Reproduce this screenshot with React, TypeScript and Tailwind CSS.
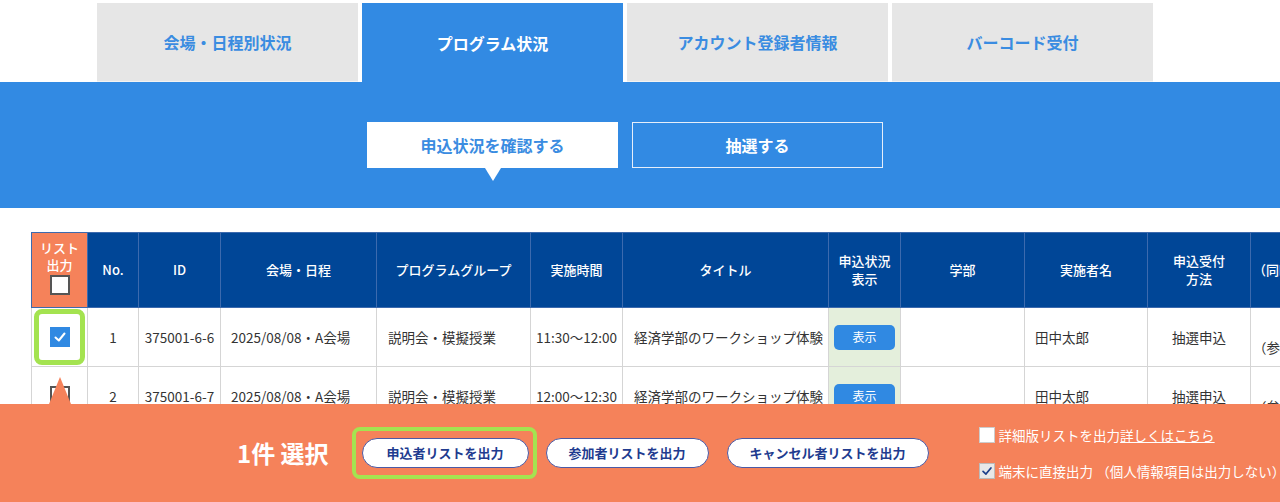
import React from "react";

const font = { fontFamily: '"Noto Sans CJK JP", "Noto Sans", sans-serif' };

const tabs = [
  { label: "会場・日程別状況", active: false },
  { label: "プログラム状況", active: true },
  { label: "アカウント登録者情報", active: false },
  { label: "バーコード受付", active: false },
];

const cols = [56, 51, 82, 156, 154, 92, 206, 72, 124, 123, 103, 140];

const rows = [
  { no: 1, id: "375001-6-6", date: "2025/08/08・A会場", group: "説明会・模擬授業", time: "11:30〜12:00", checked: true },
  { no: 2, id: "375001-6-7", date: "2025/08/08・A会場", group: "説明会・模擬授業", time: "12:00〜12:30", checked: false },
];

const Check = ({ className }: { className?: string }) => (
  <svg viewBox="0 0 16 16" className={className} fill="none">
    <path d="M3.5 8.5 L6.8 11.5 L12.5 4.5" stroke="currentColor" strokeWidth="2" strokeLinecap="round" strokeLinejoin="round" />
  </svg>
);

const Th = ({ children, className = "" }: { children?: React.ReactNode; className?: string }) => (
  <th className={`border border-[#3c6aae] text-[13px] font-medium leading-[18px] text-white ${className}`}>{children}</th>
);

const Td = ({ children, className = "" }: { children?: React.ReactNode; className?: string }) => (
  <td className={`border border-[#d5d5d5] text-[13.5px] text-[#333] ${className}`}>{children}</td>
);

export default function App() {
  return (
    <div className="relative h-[502px] w-[1280px] overflow-hidden bg-white" style={font}>
      {/* tabs */}
      <div className="ml-[97px] flex gap-[4px] pt-[3px]">
        {tabs.map((t) => (
          <div
            key={t.label}
            className={`flex h-[79px] w-[261px] items-center justify-center text-[16px] font-bold ${
              t.active ? "bg-[#328ae3] text-white" : "border-b border-[#f3f3f3] bg-[#e6e6e6] text-[#3a8ce1]"
            }`}
          >
            {t.label}
          </div>
        ))}
      </div>

      {/* blue band */}
      <div className="flex h-[126px] items-start bg-[#328ae3] pt-[40px]">
        <div className="ml-[367px] flex gap-[14px]">
          <div className="relative flex h-[46px] w-[251px] items-center justify-center bg-white text-[16px] font-bold text-[#3a8ce1]">
            申込状況を確認する
            <span className="absolute left-1/2 top-full -translate-x-1/2 border-x-[8px] border-t-[13px] border-x-transparent border-t-white" />
          </div>
          <div className="flex h-[46px] w-[251px] items-center justify-center border border-[#e6eefa] text-[16px] font-bold text-white">
            抽選する
          </div>
        </div>
      </div>

      {/* table */}
      <div className="ml-[31px] mt-[24px]">
        <table className="table-fixed border-collapse" style={{ width: cols.reduce((a, b) => a + b, 0) }}>
          <colgroup>
            {cols.map((w, i) => (
              <col key={i} style={{ width: w }} />
            ))}
          </colgroup>
          <thead>
            <tr className="h-[75px] bg-[#004697]">
              <Th className="bg-[#f5825a] align-top">
                <div className="flex flex-col items-center pt-[6px] leading-[17px]">
                  <span>リスト</span>
                  <span>出力</span>
                  <span className="mt-[2px] block h-[20px] w-[20px] border-2 border-[#555] bg-white" />
                </div>
              </Th>
              <Th>No.</Th>
              <Th>ID</Th>
              <Th>会場・日程</Th>
              <Th>プログラムグループ</Th>
              <Th>実施時間</Th>
              <Th>タイトル</Th>
              <Th>
                申込状況
                <br />
                表示
              </Th>
              <Th>学部</Th>
              <Th>実施者名</Th>
              <Th>
                申込受付
                <br />
                方法
              </Th>
              <Th className="text-left">
                <span className="pl-[2px]">（同時申込）</span>
              </Th>
            </tr>
          </thead>
          <tbody>
            {rows.map((r) => (
              <tr key={r.no} className="h-[59px]">
                <Td className="relative text-center">
                  {r.checked && (
                    <span className="absolute inset-x-[2px] inset-y-[1px] rounded-[8px] border-[5px] border-[#a4e350]" />
                  )}
                  {r.checked ? (
                    <span className="mx-auto flex h-[20px] w-[20px] items-center justify-center bg-[#3089e2] text-white">
                      <Check className="h-[16px] w-[16px]" />
                    </span>
                  ) : (
                    <span className="mx-auto block h-[20px] w-[20px] border-2 border-[#555] bg-white" />
                  )}
                </Td>
                <Td className="text-center">{r.no}</Td>
                <Td className="text-center">{r.id}</Td>
                <Td className="pl-[10px]">{r.date}</Td>
                <Td className="pl-[11px]">{r.group}</Td>
                <Td className="text-center">{r.time}</Td>
                <Td className="pl-[11px]">経済学部のワークショップ体験</Td>
                <Td className="bg-[#e4efdc]">
                  <span className="mx-auto flex h-[25px] w-[61px] items-center justify-center rounded-[5px] bg-[#3089e2] text-[12px] text-white">
                    表示
                  </span>
                </Td>
                <Td />
                <Td className="pl-[10px]">田中太郎</Td>
                <Td className="text-center">抽選申込</Td>
                <Td className="pl-[2px] pt-[20px]">（参加）</Td>
              </tr>
            ))}
          </tbody>
        </table>
      </div>

      {/* footer bar */}
      <div className="absolute inset-x-0 bottom-0 flex h-[98px] items-center bg-[#f5825a] pl-[237px]">
        <span className="absolute left-[49px] top-[-27px] border-x-[11px] border-b-[27px] border-x-transparent border-b-[#f5825a]" />
        <div className="shrink-0 whitespace-nowrap text-[24px] font-bold text-white">1件 選択</div>
        <div className="ml-[23px] shrink-0 rounded-[8px] border-4 border-[#a4e350] py-[7px] pl-[6px] pr-[4px]">
          <button className="h-[30px] w-[167px] rounded-full border border-[#4c5aa5] bg-white text-[13px] font-bold text-[#213b8f]">
            申込者リストを出力
          </button>
        </div>
        <button className="ml-[9px] h-[30px] w-[163px] shrink-0 rounded-full border border-[#4c5aa5] bg-white text-[13px] font-bold text-[#213b8f]">
          参加者リストを出力
        </button>
        <button className="ml-[18px] h-[30px] w-[202px] shrink-0 rounded-full border border-[#4c5aa5] bg-white text-[13px] font-bold text-[#213b8f]">
          キャンセル者リストを出力
        </button>
        <div className="ml-[50px] flex shrink-0 flex-col gap-[15px] text-[13.5px] text-white">
          <div className="flex items-center gap-[4px]">
            <span className="block h-[16px] w-[16px] border border-[#ccc] bg-white" />
            <span className="whitespace-nowrap">
              詳細版リストを出力<span className="underline">詳しくはこちら</span>
            </span>
          </div>
          <div className="flex items-center gap-[4px]">
            <span className="flex h-[16px] w-[16px] items-center justify-center border border-[#bbb] bg-[#e8e8e8] text-[#1d3f8a]">
              <Check className="h-[14px] w-[14px]" />
            </span>
            <span className="whitespace-nowrap">端末に直接出力 （個人情報項目は出力しない）</span>
          </div>
        </div>
      </div>
    </div>
  );
}
